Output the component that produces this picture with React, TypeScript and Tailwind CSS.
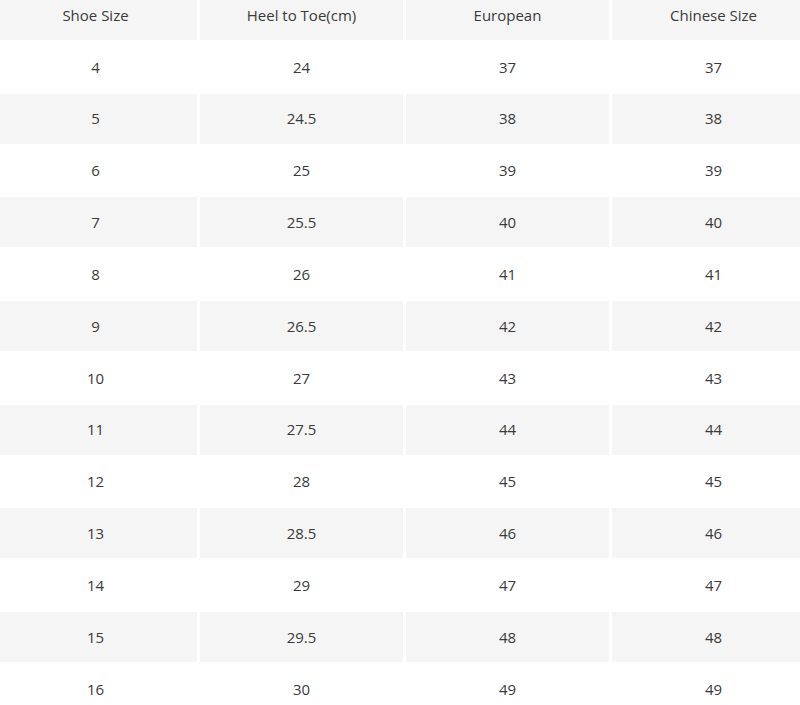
const headers = ["Shoe Size", "Heel to Toe(cm)", "European", "Chinese Size"];

const rows = [
  ["4", "24", "37", "37"],
  ["5", "24.5", "38", "38"],
  ["6", "25", "39", "39"],
  ["7", "25.5", "40", "40"],
  ["8", "26", "41", "41"],
  ["9", "26.5", "42", "42"],
  ["10", "27", "43", "43"],
  ["11", "27.5", "44", "44"],
  ["12", "28", "45", "45"],
  ["13", "28.5", "46", "46"],
  ["14", "29", "47", "47"],
  ["15", "29.5", "48", "48"],
  ["16", "30", "49", "49"],
];

export default function App() {
  return (
    <main className="w-[800px] h-[705px] overflow-hidden bg-white font-['Open_Sans',sans-serif] text-[15px] text-[#3a3a3a]">
      <div className="ml-[-6px] w-[821px] grid grid-cols-[203px_203px_203px_203px] gap-x-[3px] gap-y-[1.83px]">
        {headers.map((h) => (
          <div key={h} className="h-[40px] bg-[#f5f5f5] flex justify-center pt-[4px] leading-[22px]">
            {h}
          </div>
        ))}
        {rows.map((row, i) =>
          row.map((cell, j) => (
            <div
              key={i + "-" + j}
              className={
                "h-[50px] flex items-center justify-center " +
                (i % 2 === 1 ? "bg-[#f5f5f5]" : "bg-white")
              }
            >
              {cell}
            </div>
          ))
        )}
      </div>
    </main>
  );
}
